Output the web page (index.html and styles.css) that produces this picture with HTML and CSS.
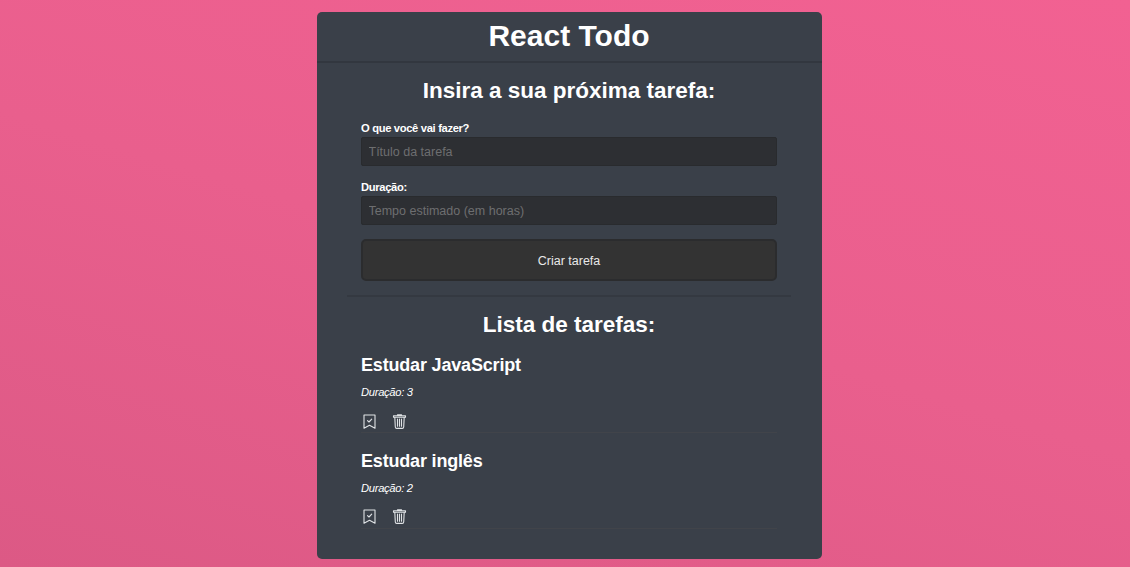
FILE: index.html
```html
<!DOCTYPE html>
<html lang="pt-BR">
<head>
<meta charset="utf-8">
<title>React Todo</title>
<link rel="stylesheet" href="styles.css">
</head>
<body>
<svg class="sprite" aria-hidden="true">
  <symbol id="bookmark-check" viewBox="0 0 15 15">
    <path d="M2 1H13V14.200L7.500 11.300L2 14.200Z"/>
    <path d="M5.500 6.600L7 8L9.700 5.200"/>
  </symbol>
  <symbol id="trash" viewBox="0 0 15 15">
    <path d="M1.500 1.800H13.500V3.200H1.500ZM5.500 1.800V.7H9.500V1.800"/>
    <path d="M2.800 3.300L3.300 13Q3.400 14.400 4.700 14.400H10.300Q11.600 14.400 11.700 13L12.200 3.300M5.500 5V12.300M7.500 5V12.300M9.500 5V12.300"/>
  </symbol>
</svg>
<main class="app">
  <header class="app-header"><h1>React Todo</h1></header>
  <section class="form-section">
    <h2>Insira a sua próxima tarefa:</h2>
    <form>
      <div class="field">
        <label for="title">O que você vai fazer?</label>
        <input type="text" id="title" placeholder="Título da tarefa">
      </div>
      <div class="field">
        <label for="time">Duração:</label>
        <input type="text" id="time" placeholder="Tempo estimado (em horas)">
      </div>
      <button class="submit" type="button">Criar tarefa</button>
    </form>
  </section>
  <section class="list-section">
    <h2>Lista de tarefas:</h2>
    <article class="todo">
      <h3>Estudar JavaScript</h3>
      <p>Duração: 3</p>
      <div class="actions">
        <svg class="icon"><use href="#bookmark-check"/></svg>
        <svg class="icon"><use href="#trash"/></svg>
      </div>
    </article>
    <article class="todo">
      <h3>Estudar inglês</h3>
      <p>Duração: 2</p>
      <div class="actions">
        <svg class="icon"><use href="#bookmark-check"/></svg>
        <svg class="icon"><use href="#trash"/></svg>
      </div>
    </article>
  </section>
</main>
</body>
</html>
```
FILE: styles.css
```css
* { box-sizing: border-box; margin: 0; padding: 0; }

body {
  height: 567px;
  padding: 12px 0 0 316.5px;
  overflow: hidden;
  font-family: "Liberation Sans", Arial, sans-serif;
  color: #fff;
  background: linear-gradient(197deg, #f26192 0%, #e95f8d 50%, #dc5985 100%);
}

.sprite { display: none; }

.app {
  width: 505px;
  height: 546.5px;
  border-radius: 5px;
  background: #3a4049;
}

.app-header {
  height: 51px;
  border-bottom: 2px solid #32373f;
}

h1 { font-size: 30px; line-height: 48px; text-align: center; }

h2 { font-size: 22.5px; line-height: 26px; text-align: center; }

.form-section {
  height: 234px;
  margin: 0 30.5px;
  padding: 15px 14px 0;
  border-bottom: 2px solid #343941;
}

form { padding-top: 17px; }

.field { height: 59px; }

.field label {
  display: block;
  font-size: 11.2px;
  letter-spacing: -0.33px;
  font-weight: bold;
  line-height: 14px;
  height: 16px;
}

.field input {
  display: block;
  width: 100%;
  height: 29px;
  padding: 0 6.5px;
  border: 1px solid #292b2e;
  border-radius: 2px;
  outline: none;
  background: #2d2f33;
  font-family: inherit;
  font-size: 12.5px;
  color: #fff;
}

.field input::placeholder { color: #6d6e70; opacity: 1; }

.submit {
  display: block;
  width: 100%;
  height: 42px;
  border: 2px solid #2b2c2e;
  padding-top: 1px;
  border-radius: 5px;
  background: #333;
  font-family: inherit;
  font-size: 12.5px;
  color: #e8e8e8;
}

.list-section { padding: 15px 44.5px 0; }

.list-section h2 { margin-bottom: 13px; }

.todo {
  height: 95.5px;
  padding-top: 3px;
}

.todo h3 {
  font-size: 18px;
  line-height: 22px;
  letter-spacing: -0.18px;
}

.todo p {
  margin-top: 8px;
  font-size: 11.2px;
  font-style: italic;
  letter-spacing: -0.3px;
  line-height: 16px;
}

.actions {
  display: flex;
  gap: 15px;
  height: 33px;
  padding: 13.5px 0 0 0.5px;
  border-bottom: 1px solid #41444a;
}

.icon {
  width: 15px;
  height: 15px;
  fill: none;
  stroke: #e0e3e6;
  stroke-width: 1.1;
  stroke-linecap: round;
  stroke-linejoin: round;
}
```
